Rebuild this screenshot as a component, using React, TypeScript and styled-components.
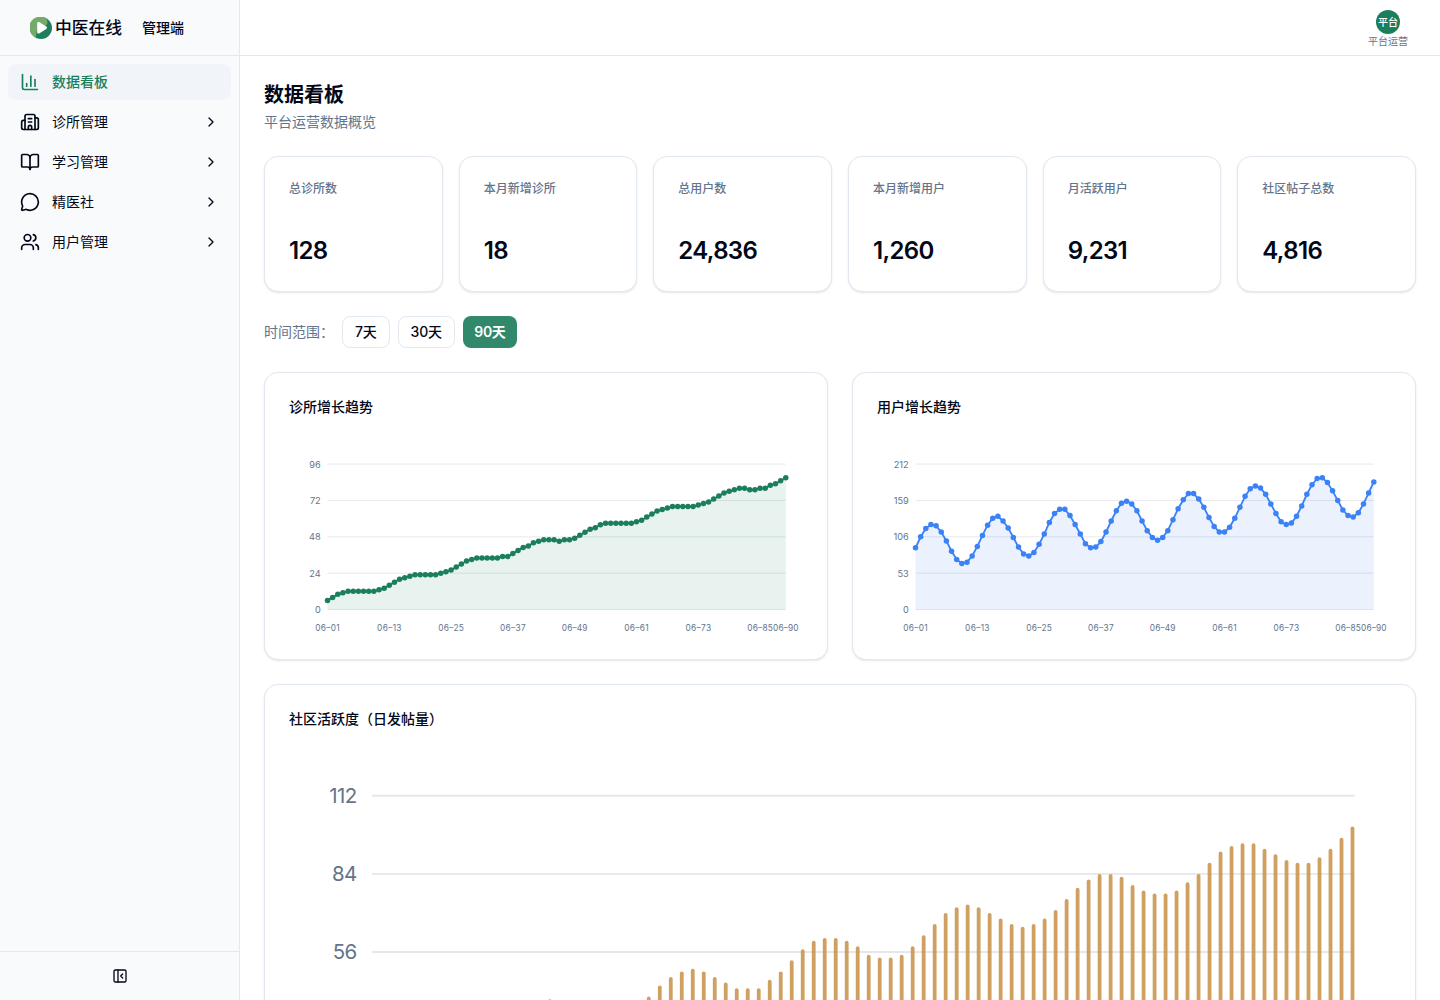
import { useState } from "react";
import styled, { createGlobalStyle } from "styled-components";
import { BookOpen, ChevronRight, MessageCircle, Users } from "lucide-react";

const GlobalStyle = createGlobalStyle`
  * {
    box-sizing: border-box;
  }
  body {
    margin: 0;
    font-family: Inter, "Noto Sans CJK SC", sans-serif;
    color: #020817;
    background: white;
  }
`;

const Layout = styled.div`
  display: flex;
  height: 1000px;
  overflow: hidden;
`;

const Sidebar = styled.aside`
  display: flex;
  flex-direction: column;
  width: 240px;
  flex-shrink: 0;
  background: #f8fafc;
  border-right: 1px solid #e2e8f0;
`;

const Brand = styled.div`
  display: flex;
  align-items: center;
  height: 56px;
  padding-left: 30px;
  border-bottom: 1px solid #e2e8f0;
`;

const BrandName = styled.span`
  width: 68px;
  margin-left: 3px;
  font-size: 16.8px;
  line-height: 24px;
  font-weight: 500;
`;

const BrandRole = styled.span`
  margin-left: 19px;
  font-size: 14px;
  line-height: 20px;
  font-weight: 500;
`;

const Menu = styled.nav`
  display: flex;
  flex: 1;
  flex-direction: column;
  gap: 4px;
  padding: 8px;
`;

const MenuItem = styled.a<{ $active?: boolean }>`
  display: flex;
  align-items: center;
  gap: 12px;
  height: 36px;
  padding: 0 12px;
  border-radius: 8px;
  font-size: 14px;
  line-height: 20px;
  font-weight: ${(p) => (p.$active ? 500 : 400)};
  color: ${(p) => (p.$active ? "#1a7f5a" : "#020817")};
  background: ${(p) => (p.$active ? "#f1f5f9" : "transparent")};

  span {
    flex: 1;
  }
`;

const SidebarFooter = styled.div`
  display: flex;
  align-items: center;
  justify-content: center;
  height: 49px;
  border-top: 1px solid #e2e8f0;
`;

const Content = styled.div`
  flex: 1;
  min-width: 0;
`;

const TopBar = styled.header`
  display: flex;
  justify-content: flex-end;
  height: 56px;
  padding: 10px 32px 0 0;
  border-bottom: 1px solid #e2e8f0;
`;

const Profile = styled.div`
  display: flex;
  flex-direction: column;
  align-items: center;
  gap: 1px;
  font-size: 10px;
  line-height: 12px;
  color: #64748b;
`;

const Avatar = styled.div`
  display: flex;
  align-items: center;
  justify-content: center;
  width: 24px;
  height: 24px;
  border-radius: 50%;
  background: #1a7f5a;
  color: white;
  font-weight: 500;
`;

const Main = styled.main`
  padding: 25px 24px 24px;
`;

const Title = styled.h1`
  margin: 0;
  font-size: 20px;
  line-height: 28px;
  font-weight: 600;
`;

const Subtitle = styled.p`
  margin: 3px 0 24px;
  font-size: 14px;
  line-height: 20px;
  color: #64748b;
`;

const Card = styled.section`
  border: 1px solid #e2e8f0;
  border-radius: 14px;
  background: white;
  box-shadow: 0 1px 2px rgba(0, 0, 0, 0.1);
`;

const StatGrid = styled.div`
  display: grid;
  grid-template-columns: repeat(6, 1fr);
  gap: 16px;
`;

const StatCard = styled(Card)`
  height: 136px;
  padding: 24px;
`;

const StatLabel = styled.div`
  font-size: 12px;
  line-height: 16px;
  font-weight: 500;
  color: #64748b;
`;

const StatValue = styled.div`
  margin-top: 38px;
  font-size: 24px;
  line-height: 32px;
  font-weight: 600;
  letter-spacing: -0.65px;
`;

const Filter = styled.div`
  display: flex;
  align-items: center;
  gap: 8px;
  height: 32px;
  margin: 24px 0;
`;

const FilterLabel = styled.span`
  width: 70px;
  font-size: 14px;
  line-height: 20px;
  padding-bottom: 1px;
  color: #64748b;
`;

const RangeButton = styled.button<{ $active: boolean }>`
  height: 32px;
  padding: 0 ${(p) => (p.$active ? 11.5 : 12)}px;
  border: ${(p) => (p.$active ? "none" : "1px solid #e2e8f0")};
  border-radius: 8px;
  font-family: inherit;
  font-size: 14px;
  line-height: 20px;
  font-weight: ${(p) => (p.$active ? 600 : 500)};
  letter-spacing: ${(p) => (p.$active ? -0.4 : -0.2)}px;
  color: ${(p) => (p.$active ? "white" : "#020817")};
  background: ${(p) => (p.$active ? "#31886a" : "white")};
`;

const ChartGrid = styled.div`
  display: grid;
  grid-template-columns: 1fr 1fr;
  gap: 24px;
  margin-bottom: 24px;
`;

const ChartCard = styled(Card)<{ $height: number }>`
  height: ${(p) => p.$height}px;
  padding: 24px;
  overflow: hidden;
`;

const ChartTitle = styled.h2`
  margin: 0;
  font-size: 14px;
  line-height: 20px;
  font-weight: 500;
`;

const ChartSvg = styled.svg`
  display: block;
  overflow: visible;
  fill: #64748b;
`;

const stats = [
  { label: "总诊所数", value: "128" },
  { label: "本月新增诊所", value: "18" },
  { label: "总用户数", value: "24,836" },
  { label: "本月新增用户", value: "1,260" },
  { label: "月活跃用户", value: "9,231" },
  { label: "社区帖子总数", value: "4,816" },
];

const ranges = ["7天", "30天", "90天"];

const clinics = [
  6, 8, 10, 11, 12, 12, 12, 12, 12, 12, 13, 14, 16, 18, 20, 21, 22, 23, 23, 23,
  23, 23, 24, 25, 26, 28, 30, 32, 33, 34, 34, 34, 34, 34, 35, 35, 37, 39, 41, 42,
  44, 45, 46, 46, 46, 45, 46, 46, 47, 49, 51, 53, 54, 56, 57, 57, 57, 57, 57, 57,
  58, 59, 61, 63, 65, 66, 67, 68, 68, 68, 68, 68, 69, 70, 71, 73, 75, 77, 78, 79,
  80, 80, 79, 79, 80, 80, 82, 83, 85, 87,
];

const users = [
  90, 106, 118, 124, 122, 113, 100, 85, 73, 67, 69, 78, 92, 108, 123, 133, 136,
  129, 119, 105, 91, 81, 78, 83, 95, 110, 127, 140, 146, 146, 137, 124, 110, 96,
  90, 91, 99, 113, 129, 144, 155, 158, 154, 144, 129, 115, 105, 101, 105, 115,
  131, 147, 160, 169, 169, 161, 149, 134, 121, 113, 113, 120, 133, 149, 165, 176,
  180, 177, 168, 154, 140, 128, 124, 126, 136, 151, 168, 182, 191, 192, 185, 173,
  159, 145, 137, 135, 141, 154, 170, 186,
];

const posts = [
  20, 23, 26, 28, 28, 27, 25, 23, 21, 20, 21, 23, 27, 31, 35, 38, 39, 38, 37, 35,
  32, 31, 31, 33, 36, 40, 44, 47, 49, 50, 49, 47, 45, 43, 43, 43, 46, 49, 53, 57,
  60, 61, 61, 60, 58, 55, 54, 54, 55, 58, 62, 66, 70, 72, 73, 72, 70, 68, 66, 65,
  66, 68, 71, 75, 79, 82, 84, 84, 83, 80, 78, 77, 77, 78, 81, 84, 88, 92, 94, 95,
  95, 93, 91, 89, 88, 88, 90, 93, 97, 101,
];

const xTicks = [0, 12, 24, 36, 48, 60, 72, 84, 89];

const dayLabel = (i: number) => `06–${String(i + 1).padStart(2, "0")}`;

type LineChartProps = {
  data: number[];
  max: number;
  color: string;
};

const LineChart = ({ data, max, color }: LineChartProps) => {
  const left = 38.5;
  const bottom = 192.5;
  const width = 458.3;
  const height = 145.4;
  const x = (i: number) => left + (i * width) / (data.length - 1);
  const y = (v: number) => bottom - (v / max) * height;
  const points = data.map((v, i) => `${x(i)},${y(v)}`).join(" ");

  return (
    <ChartSvg width="514" height="220">
      {[0, 1, 2, 3, 4].map((step) => {
        const value = (max / 4) * step;
        return (
          <g key={step}>
            <line
              x1={left}
              x2={left + width}
              y1={y(value)}
              y2={y(value)}
              stroke="#e5e7eb"
              strokeWidth="0.92"
            />
            <text x={left - 6.8} y={y(value) + 3.5} fontSize="9.2" textAnchor="end">
              {value}
            </text>
          </g>
        );
      })}
      <polygon
        points={`${left},${bottom} ${points} ${left + width},${bottom}`}
        fill={color}
        fillOpacity="0.1"
      />
      <polyline points={points} fill="none" stroke={color} strokeWidth="1.84" />
      {data.map((v, i) => (
        <circle key={i} cx={x(i)} cy={y(v)} r="2.75" fill={color} />
      ))}
      {xTicks.map((i) => (
        <text
          key={i}
          x={x(i)}
          y={bottom + 21.7}
          fontSize="8.3"
          textLength={i === 0 || i === 12 || i === 60 ? 24.4 : 25.6}
          textAnchor="middle"
        >
          {dayLabel(i)}
        </text>
      ))}
    </ChartSvg>
  );
};

const BarChart = ({ data, max }: { data: number[]; max: number }) => {
  const left = 83;
  const width = 982.4;
  const bottom = 379.1;
  const height = 312.3;
  const barWidth = 3.8;
  const step = (width - barWidth) / (data.length - 1);
  const y = (v: number) => bottom - (v / max) * height;

  return (
    <ChartSvg width="1102" height="440">
      {[0, 1, 2, 3, 4].map((n) => {
        const value = (max / 4) * n;
        return (
          <g key={n}>
            <line
              x1={left}
              x2={left + width}
              y1={y(value)}
              y2={y(value)}
              stroke="#e5e7eb"
              strokeWidth="1.97"
            />
            <text
              x={left - 15.3}
              y={y(value) + 7.2}
              fontSize="20.4"
              letterSpacing="-0.5"
              textAnchor="end"
            >
              {value}
            </text>
          </g>
        );
      })}
      {data.map((v, i) => (
        <rect
          key={i}
          x={left + i * step}
          y={y(v)}
          width={barWidth}
          height={bottom - y(v)}
          rx="1.9"
          fill="#c9924a"
          fillOpacity="0.87"
        />
      ))}
      {xTicks.map((i) => (
        <text
          key={i}
          x={left + i * step}
          y={bottom + 40}
          fontSize="17.7"
          textAnchor="middle"
        >
          {dayLabel(i)}
        </text>
      ))}
    </ChartSvg>
  );
};

const Logo = () => (
  <svg width="22" height="22" viewBox="0 0 22 22">
    <circle cx="11" cy="11" r="11" fill="#1f7f5c" />
    <path
      d="M15.2 0.8A11 11 0 0 0 5.2 20.4C7 19.5 5.8 15.5 7 13.5L16.5 8C18.3 6 17.3 2.3 15.2 0.8Z"
      fill="#76aa6b"
    />
    <path
      d="M7.2 6.2C7.2 5 8.2 4.6 9.1 5.1L16.3 9.6C17.2 10.2 17.2 11.3 16.3 11.9L9.1 16.4C8.2 16.9 7.2 16.5 7.2 15.3Z"
      fill="white"
    />
  </svg>
);

const iconProps = {
  width: 20,
  height: 20,
  viewBox: "0 0 24 24",
  fill: "none",
  stroke: "currentColor",
  strokeWidth: 2,
  strokeLinecap: "round" as const,
  strokeLinejoin: "round" as const,
};

const ChartIcon = () => (
  <svg {...iconProps}>
    <path d="M3 3v16a2 2 0 0 0 2 2h16" />
    <path d="M18 17V9" />
    <path d="M13 17V5" />
    <path d="M8 17v-3" />
  </svg>
);

const ClinicIcon = () => (
  <svg {...iconProps}>
    <path d="M10 12h4" />
    <path d="M10 8h4" />
    <path d="M14 21v-3a2 2 0 0 0-4 0v3" />
    <path d="M6 10H4a2 2 0 0 0-2 2v7a2 2 0 0 0 2 2h16a2 2 0 0 0 2-2V9a2 2 0 0 0-2-2h-2" />
    <path d="M6 21V5a2 2 0 0 1 2-2h8a2 2 0 0 1 2 2v16" />
  </svg>
);

const CollapseIcon = () => (
  <svg {...iconProps} width={16} height={16}>
    <rect width="18" height="18" x="3" y="3" rx="2" />
    <path d="M9 3v18" />
    <path d="m16 15-3-3 3-3" />
  </svg>
);

const menu = [
  { label: "诊所管理", icon: <ClinicIcon /> },
  { label: "学习管理", icon: <BookOpen size={20} /> },
  { label: "精医社", icon: <MessageCircle size={20} /> },
  { label: "用户管理", icon: <Users size={20} /> },
];

const App = () => {
  const [range, setRange] = useState("90天");

  return (
    <Layout>
      <GlobalStyle />
      <Sidebar>
        <Brand>
          <Logo />
          <BrandName>中医在线</BrandName>
          <BrandRole>管理端</BrandRole>
        </Brand>
        <Menu>
          <MenuItem $active>
            <ChartIcon />
            <span>数据看板</span>
          </MenuItem>
          {menu.map((item) => (
            <MenuItem key={item.label}>
              {item.icon}
              <span>{item.label}</span>
              <ChevronRight size={16} />
            </MenuItem>
          ))}
        </Menu>
        <SidebarFooter>
          <CollapseIcon />
        </SidebarFooter>
      </Sidebar>
      <Content>
        <TopBar>
          <Profile>
            <Avatar>平台</Avatar>
            平台运营
          </Profile>
        </TopBar>
        <Main>
          <Title>数据看板</Title>
          <Subtitle>平台运营数据概览</Subtitle>
          <StatGrid>
            {stats.map((stat) => (
              <StatCard key={stat.label}>
                <StatLabel>{stat.label}</StatLabel>
                <StatValue>{stat.value}</StatValue>
              </StatCard>
            ))}
          </StatGrid>
          <Filter>
            <FilterLabel>时间范围：</FilterLabel>
            {ranges.map((item) => (
              <RangeButton
                key={item}
                $active={item === range}
                onClick={() => setRange(item)}
              >
                {item}
              </RangeButton>
            ))}
          </Filter>
          <ChartGrid>
            <ChartCard $height={288}>
              <ChartTitle>诊所增长趋势</ChartTitle>
              <LineChart data={clinics} max={96} color="#1a7f5a" />
            </ChartCard>
            <ChartCard $height={288}>
              <ChartTitle>用户增长趋势</ChartTitle>
              <LineChart data={users} max={212} color="#3b82f6" />
            </ChartCard>
          </ChartGrid>
          <ChartCard $height={520}>
            <ChartTitle>社区活跃度（日发帖量）</ChartTitle>
            <BarChart data={posts} max={112} />
          </ChartCard>
        </Main>
      </Content>
    </Layout>
  );
};

export default App;
